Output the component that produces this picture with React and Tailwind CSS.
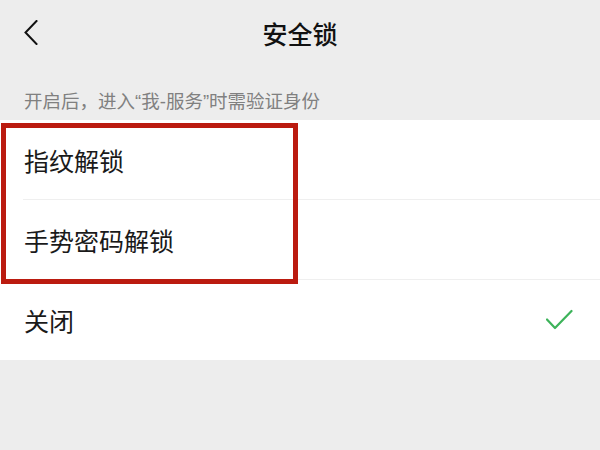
import React from 'react';

const font = { fontFamily: '"Noto Sans CJK SC", "Noto Sans", sans-serif' };
const quote = { fontFamily: '"Liberation Sans", sans-serif' };

function Row({ label, checked, divider }) {
  return (
    <div className="relative h-[80px] flex items-center justify-between pl-[24px] pr-[27px]">
      <span className="text-[25px] text-[#1a1a1a] leading-none">{label}</span>
      {checked && (
        <svg width="27" height="22" viewBox="0 0 27 22" fill="none">
          <path d="M1 10.5L9 19L25.5 2" stroke="#3db35a" strokeWidth="2.2" strokeLinecap="round" strokeLinejoin="round" />
        </svg>
      )}
      {divider && <div className="absolute bottom-0 left-[23px] right-0 h-px bg-[#efefef]" />}
    </div>
  );
}

export default function App() {
  return (
    <div className="w-[600px] h-[450px] bg-[#ededed] relative overflow-hidden" style={font}>
      <div className="relative h-[66px] flex items-center justify-center">
        <svg className="absolute left-[24px] top-[20px]" width="14" height="25" viewBox="0 0 14 25" fill="none">
          <path d="M12.5 1L1.5 12.5L12.5 24" stroke="#111" strokeWidth="2" strokeLinecap="square" />
        </svg>
        <span className="text-[25px] font-medium text-[#111] leading-none">安全锁</span>
      </div>
      <div className="h-[54px] flex items-center pl-[24px] pt-[16px]">
        <span className="text-[18.5px] text-[#808080] leading-none">
          开启后，进入<span style={quote}>“</span>我<span style={quote}>-</span>服务<span style={quote}>”</span>时需验证身份
        </span>
      </div>
      <div className="bg-white">
        <Row label="指纹解锁" divider />
        <Row label="手势密码解锁" divider />
        <Row label="关闭" checked />
      </div>
      <div className="absolute left-[1px] top-[123px] w-[297px] h-[161px] border-[5px] border-[#bb1b10]" />
    </div>
  );
}
